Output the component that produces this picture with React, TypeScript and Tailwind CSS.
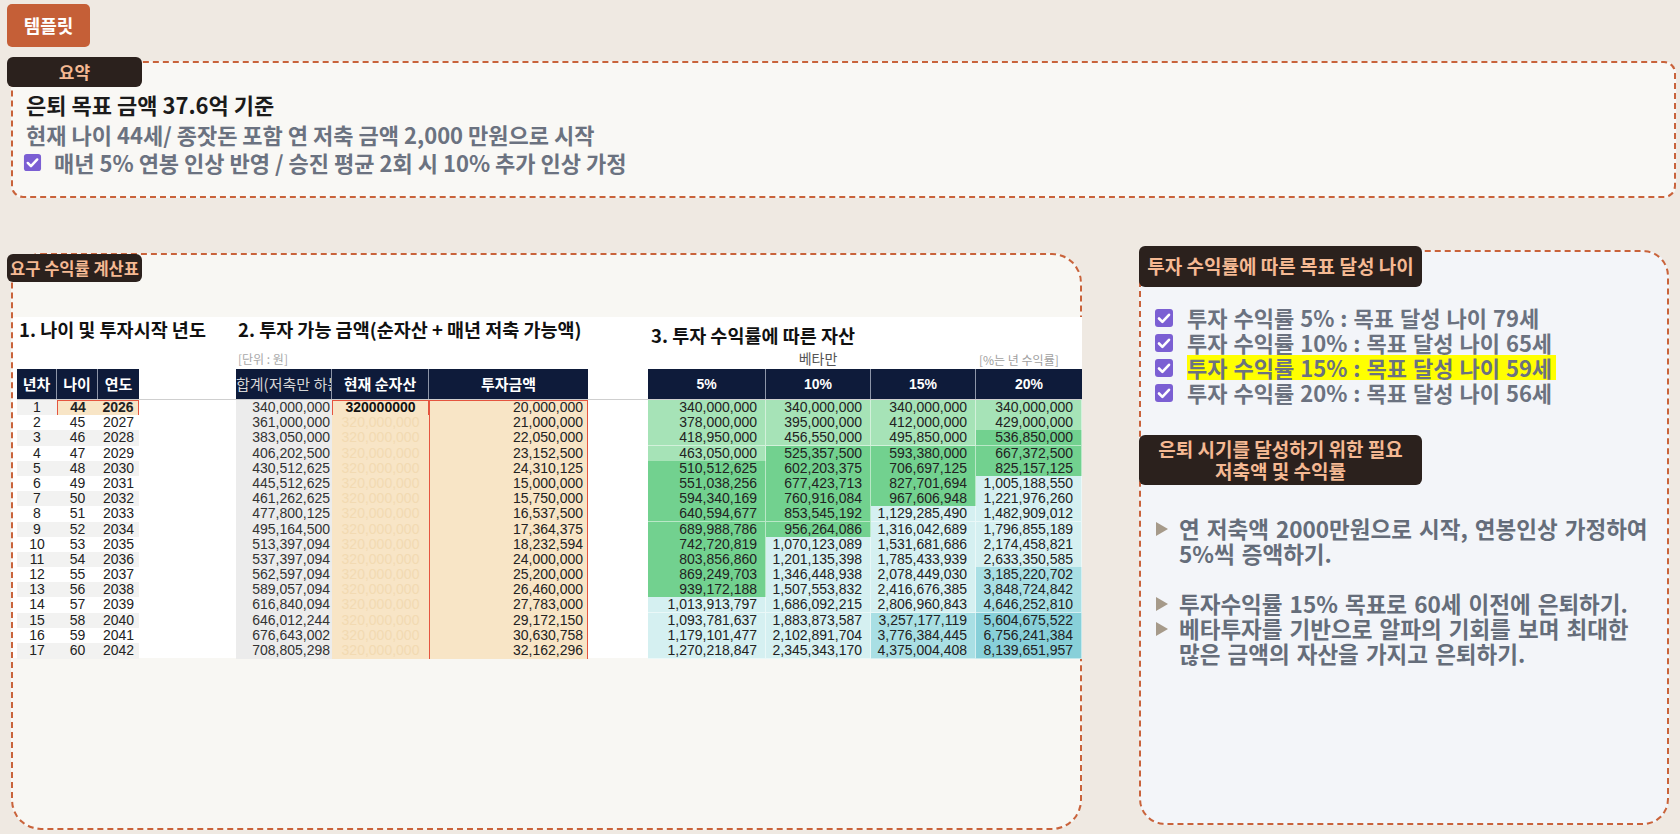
import React from 'react';

const COLS = 'grid grid-cols-[40px_41px_41px_97px_96px_97px_159px_60px_118px_105px_105px_106px]';

const totals = [
  '340,000,000', '361,000,000', '383,050,000', '406,202,500', '430,512,625', '445,512,625',
  '461,262,625', '477,800,125', '495,164,500', '513,397,094', '537,397,094', '562,597,094',
  '589,057,094', '616,840,094', '646,012,244', '676,643,002', '708,805,298'
];

const invest = [
  '20,000,000', '21,000,000', '22,050,000', '23,152,500', '24,310,125', '15,000,000',
  '15,750,000', '16,537,500', '17,364,375', '18,232,594', '24,000,000', '25,200,000',
  '26,460,000', '27,783,000', '29,172,150', '30,630,758', '32,162,296'
];

const returns = [
  [
    '340,000,000', '378,000,000', '418,950,000', '463,050,000', '510,512,625', '551,038,256',
    '594,340,169', '640,594,677', '689,988,786', '742,720,819', '803,856,860', '869,249,703',
    '939,172,188', '1,013,913,797', '1,093,781,637', '1,179,101,477', '1,270,218,847'
  ],
  [
    '340,000,000', '395,000,000', '456,550,000', '525,357,500', '602,203,375', '677,423,713',
    '760,916,084', '853,545,192', '956,264,086', '1,070,123,089', '1,201,135,398', '1,346,448,938',
    '1,507,553,832', '1,686,092,215', '1,883,873,587', '2,102,891,704', '2,345,343,170'
  ],
  [
    '340,000,000', '412,000,000', '495,850,000', '593,380,000', '706,697,125', '827,701,694',
    '967,606,948', '1,129,285,490', '1,316,042,689', '1,531,681,686', '1,785,433,939', '2,078,449,030',
    '2,416,676,385', '2,806,960,843', '3,257,177,119', '3,776,384,445', '4,375,004,408'
  ],
  [
    '340,000,000', '429,000,000', '536,850,000', '667,372,500', '825,157,125', '1,005,188,550',
    '1,221,976,260', '1,482,909,012', '1,796,855,189', '2,174,458,821', '2,633,350,585', '3,185,220,702',
    '3,848,724,842', '4,646,252,810', '5,604,675,522', '6,756,241,384', '8,139,651,957'
  ]
];

// conditional format buckets, like the sheet
const shade = (v: string) => {
  const n = Number(v.replace(/,/g, ''));
  if (n < 500000000) return 'bg-[#a6e3b7]';
  if (n < 1000000000) return 'bg-[#72d18f]';
  if (n < 3000000000) return 'bg-[#d5f0f1]';
  if (n < 5000000000) return 'bg-[#a9dfe4]';
  return 'bg-[#88d0d9]';
};

const CheckBox = ({ size }: { size: number }) => (
  <svg width={size} height={size} viewBox="0 0 20 20" className="shrink-0">
    <rect x="1" y="1" width="18" height="18" rx="3" fill="#7b5fd3" />
    <path d="M5 10.5l3.4 3.4L15 6.8" stroke="#fff" strokeWidth="2.6" fill="none" strokeLinecap="round" strokeLinejoin="round" />
  </svg>
);

const Arrow = () => (
  <svg width="14" height="16" viewBox="0 0 14 16" className="mt-[5px] shrink-0">
    <polygon points="1,1 13,8 1,15" fill="#a69a8a" />
  </svg>
);

const Tag = ({ children, className }: { children: React.ReactNode; className: string }) => (
  <div className={`flex items-center justify-center rounded-[6px] bg-[#2b211d] font-bold text-[#f5b993] ${className}`}>
    {children}
  </div>
);

const Table = () => (
  <div className="w-[1069px] bg-white pl-[4px] font-['Liberation_Sans',sans-serif] text-[14px] text-[#222]">
    <div className={`${COLS} h-[30px] font-['Noto_Sans_CJK_KR',sans-serif] text-[18.5px] font-bold leading-[24px] text-[#111]`}>
      <div className="col-span-4 pl-[2px] whitespace-nowrap">1. 나이 및 투자시작 년도</div>
      <div className="col-span-4 pl-[2px] whitespace-nowrap">2. 투자 가능 금액(순자산 + 매년 저축 가능액)</div>
      <div className="col-span-4 mt-[6px] pl-[3px] whitespace-nowrap">3. 투자 수익률에 따른 자산</div>
    </div>
    <div className={`${COLS} h-[22px] items-center font-['Noto_Sans_CJK_KR',sans-serif]`}>
      <div className="col-span-4" />
      <div className="col-span-4 pl-[2px] pt-[2px] text-[12px] text-[#a8a8a8]">[단위 : 원]</div>
      <div className="col-span-3 pl-[12px] text-center text-[14px] text-[#555]">베타만</div>
      <div className="pl-[3px] pt-[4px] text-[12px] whitespace-nowrap text-[#a0a0a0]">[%는 년 수익률]</div>
    </div>
    <div className={`${COLS} h-[31px] border-b border-[#cfcfcf] font-['Noto_Sans_CJK_KR',sans-serif] text-[15px] font-bold text-white`}>
      <div className="flex items-center justify-center border-r border-[#8d95a8] bg-[#0e1b3a]">년차</div>
      <div className="flex items-center justify-center border-r border-[#8d95a8] bg-[#0e1b3a]">나이</div>
      <div className="flex items-center justify-center bg-[#0e1b3a]">연도</div>
      <div />
      <div className="flex items-center overflow-hidden whitespace-nowrap border-r border-[#8d95a8] bg-[#0e1b3a] font-normal text-[#d4d4d4]">합계(저축만 하는</div>
      <div className="flex items-center justify-center border-r border-[#8d95a8] bg-[#0e1b3a]">현재 순자산</div>
      <div className="flex items-center justify-center bg-[#0e1b3a]">투자금액</div>
      <div />
      {['5%', '10%', '15%', '20%'].map((p, i) => (
        <div
          key={p}
          className={`flex items-center justify-center bg-[#0e1b3a] font-['Liberation_Sans',sans-serif] text-[14px] ${i < 3 ? 'border-r border-[#8d95a8]' : ''}`}>
          {p}
        </div>
      ))}
    </div>
    {totals.map((t, r) => {
      const stripe = r % 2 === 0 ? 'bg-[#f2f2f1]' : 'bg-white';
      const first = r === 0;
      return (
        <div key={r} className={`${COLS} h-[15.2px] leading-[15px]`}>
          <div className={`text-center ${stripe}`}>{r + 1}</div>
          {first ? (
            <div className="col-span-2 grid grid-cols-2 border-[1.5px] border-[#e5553f] bg-[#f8e5c6] font-bold">
              <div className="text-center leading-[12px]">{44 + r}</div>
              <div className="text-center leading-[12px]">{2026 + r}</div>
            </div>
          ) : (
            <>
              <div className={`text-center ${stripe}`}>{44 + r}</div>
              <div className={`text-center ${stripe}`}>{2026 + r}</div>
            </>
          )}
          <div />
          <div className="bg-[#ececec] pr-[2px] text-right text-[#333]">{t}</div>
          {first ? (
            <div className="border-[1.5px] border-[#e5553f] bg-[#f8e5c6] text-center font-bold leading-[12px] text-[#111]">320000000</div>
          ) : (
            <div className="bg-[#f8e5c6] text-center text-[#f2dab2]">320,000,000</div>
          )}
          <div
            className={`border-x-[1.5px] border-[#e5553f] bg-[#f8e5c6] pr-[4px] text-right ${first ? 'border-y-[1.5px] leading-[12px]' : ''}`}>
            {invest[r]}
          </div>
          <div />
          {returns.map((col, c) => (
            <div key={c} className={`border-b border-r border-white/50 pr-[8px] text-right ${shade(col[r])}`}>
              {col[r]}
            </div>
          ))}
        </div>
      );
    })}
  </div>
);

export default function App() {
  return (
    <div className="min-h-[834px] w-full bg-[#efe9e2] pb-[4px] font-['Noto_Sans_CJK_KR',sans-serif]">
      <div className="pl-[7px] pt-[4px]">
        <button className="flex h-[43px] w-[83px] items-center justify-center rounded-[5px] bg-[#c55f37] text-[18px] font-bold text-white">
          템플릿
        </button>
      </div>

      <div className="relative ml-[11px] mt-[14px] h-[137px] w-[1665px] rounded-[12px] border-2 border-dashed border-[#c9633b] bg-[#f9f8f5] pl-[13px] pt-[26px]">
        <Tag className="absolute -left-[6px] -top-[6px] h-[30px] w-[135px] text-[17px]">요약</Tag>
        <p className="text-[22px] font-bold leading-[30px] text-[#1b1b1b]">은퇴 목표 금액 37.6억 기준</p>
        <p className="text-[22px] font-semibold leading-[30px] text-[#6b7280]">현재 나이 44세/ 종잣돈 포함 연 저축 금액 2,000 만원으로 시작</p>
        <p className="-ml-[3px] flex items-center gap-[12px] text-[22px] font-semibold leading-[26px] text-[#6b7280]">
          <CheckBox size={19} />
          매년 5% 연봉 인상 반영 / 승진 평균 2회 시 10% 추가 인상 가정
        </p>
      </div>

      <div className="mt-[52px] flex items-start">
        <div className="relative ml-[11px] mt-[3px] h-[577px] w-[1071px] rounded-[30px] border-2 border-dashed border-[#c9633b] bg-[#f8f7f3] pt-[62px]">
          <Tag className="absolute -left-[6px] -top-[1px] h-[28px] w-[135px] text-[16.5px] whitespace-nowrap">요구 수익률 계산표</Tag>
          <Table />
        </div>

        <div className="relative ml-[57px] h-[575px] w-[530px] rounded-[26px] border-2 border-dashed border-[#c9633b] bg-[#f3f5f9] pl-[13px] pt-[53px]">
          <Tag className="absolute -left-[2px] -top-[6px] h-[41px] w-[283px] text-[19px] whitespace-nowrap">투자 수익률에 따른 목표 달성 나이</Tag>
          <ul className="flex flex-col text-[22px] font-bold leading-[25px] whitespace-nowrap text-[#6b7280] [word-spacing:1px]">
            <li className="flex items-center gap-[13px]"><CheckBox size={20} />투자 수익률 5% : 목표 달성 나이 79세</li>
            <li className="flex items-center gap-[13px]"><CheckBox size={20} />투자 수익률 10% : 목표 달성 나이 65세</li>
            <li className="flex items-center gap-[13px]">
              <CheckBox size={20} />
              <span className="bg-[#ffff00] pr-[4px]">투자 수익률 15% : 목표 달성 나이 59세</span>
            </li>
            <li className="flex items-center gap-[13px]"><CheckBox size={20} />투자 수익률 20% : 목표 달성 나이 56세</li>
          </ul>

          <Tag className="-ml-[15px] mt-[30px] h-[50px] w-[283px] flex-col text-[19px] leading-[22px] whitespace-nowrap">
            <span>은퇴 시기를 달성하기 위한 필요</span>
            <span>저축액 및 수익률</span>
          </Tag>

          <div className="mt-[31px] flex flex-col text-[22.5px] font-bold leading-[25px] whitespace-nowrap text-[#656d7a] [word-spacing:2px]">
            <div className="flex gap-[10px] pl-[1px]">
              <Arrow />
              <div>연 저축액 2000만원으로 시작, 연봉인상 가정하여<br />5%씩 증액하기.</div>
            </div>
            <div className="mt-[25px] flex gap-[10px] pl-[1px]">
              <Arrow />
              <div>투자수익률 15% 목표로 60세 이전에 은퇴하기.</div>
            </div>
            <div className="flex gap-[10px] pl-[1px]">
              <Arrow />
              <div>베타투자를 기반으로 알파의 기회를 보며 최대한<br />많은 금액의 자산을 가지고 은퇴하기.</div>
            </div>
          </div>
        </div>
      </div>
    </div>
  );
}
